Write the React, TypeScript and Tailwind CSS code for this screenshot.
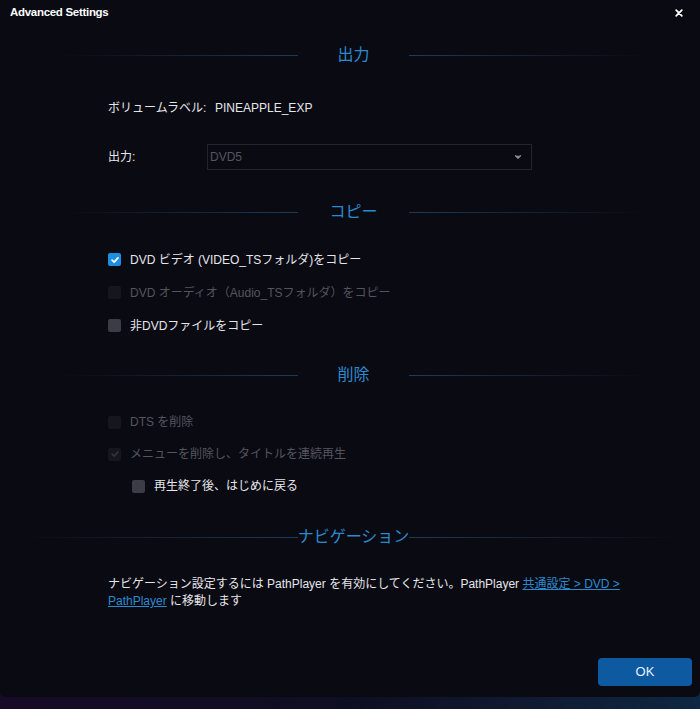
import { ChevronDown } from 'lucide-react';

const FONT = "font-['Liberation_Sans','Noto_Sans_CJK_JP',sans-serif]";

function SectionHeading({ title, wide = false }: { title: string; wide?: boolean }) {
  return (
    <div className="flex h-[24px] items-center">
      <div className={`h-px bg-gradient-to-r from-transparent to-[#1f3a55] ${wide ? 'ml-[20px] w-[278px]' : 'ml-[60px] w-[238px]'}`} />
      <div className="flex w-[111px] shrink-0 justify-center whitespace-nowrap text-[16px] leading-none text-[#2a8ad0]">{title}</div>
      <div className={`h-px bg-gradient-to-l from-transparent to-[#1f3a55] ${wide ? 'w-[270px]' : 'w-[238px]'}`} />
    </div>
  );
}

function Check({ checked = false, disabled = false }: { checked?: boolean; disabled?: boolean }) {
  if (checked && !disabled) {
    return (
      <span className="flex h-[13px] w-[13px] items-center justify-center rounded-[2px] bg-[#1e8fe0]">
        <svg viewBox="0 0 12 12" className="h-[10px] w-[10px]" fill="none" stroke="white" strokeWidth="2" strokeLinecap="round" strokeLinejoin="round">
          <path d="M2.5 6.2 5 8.6 9.6 3.4" />
        </svg>
      </span>
    );
  }
  if (checked && disabled) {
    return (
      <span className="flex h-[13px] w-[13px] items-center justify-center rounded-[2px] bg-[#16161e]">
        <svg viewBox="0 0 12 12" className="h-[10px] w-[10px]" fill="none" stroke="#33333d" strokeWidth="2" strokeLinecap="round" strokeLinejoin="round">
          <path d="M2.5 6.2 5 8.6 9.6 3.4" />
        </svg>
      </span>
    );
  }
  return <span className={`h-[13px] w-[13px] rounded-[2px] ${disabled ? 'bg-[#16161e]' : 'bg-[#3c3c46]'}`} />;
}

function CheckRow({ label, checked, disabled, indent = false, h = 'h-[33px]' }: { label: string; checked?: boolean; disabled?: boolean; indent?: boolean; h?: string }) {
  return (
    <div className={`flex ${h} items-center gap-[9px] ${indent ? 'pl-[132px]' : 'pl-[108px]'}`}>
      <Check checked={checked} disabled={disabled} />
      <span className={`text-[12px] ${disabled ? 'text-[#55555e]' : 'text-[#e6e6ea]'}`}>{label}</span>
    </div>
  );
}

export default function App() {
  return (
    <div className={`h-[709px] w-[700px] overflow-hidden bg-gradient-to-r from-[#170a28] via-[#0e0e22] to-[#0e2742] ${FONT}`}>
      <div className="relative h-[697px] w-[700px] rounded-b-[6px] bg-[#0a0a12]">
        <div className="flex h-[26px] items-center justify-between px-[10px]">
          <span className="text-[11.5px] font-bold tracking-[-0.3px] text-white">Advanced Settings</span>
          <svg viewBox="0 0 10 10" className="mr-[7px] h-[8px] w-[8px]" stroke="white" strokeWidth="2.2" strokeLinecap="round">
            <path d="M1.5 1.5 8.5 8.5M8.5 1.5 1.5 8.5" />
          </svg>
        </div>

        <div className="mt-[17px]">
          <SectionHeading title="出力" />
        </div>

        <div className="mt-[31px] flex h-[20px] items-center pl-[108px] text-[12px] text-[#e6e6ea]">
          <span className="w-[107px]">ボリュームラベル:</span>
          <span>PINEAPPLE_EXP</span>
        </div>

        <div className="mt-[26px] flex h-[26px] items-center pl-[108px] text-[12px]">
          <span className="w-[99px] text-[#e6e6ea]">出力:</span>
          <div className="flex h-[26px] w-[325px] items-center justify-between border border-[#24242e] pl-[2px] pr-[8px] text-[#55555f]">
            <span>DVD5</span>
            <ChevronDown className="h-[10px] w-[10px] fill-[#8a8a94] text-[#8a8a94]" strokeWidth={3} />
          </div>
        </div>

        <div className="mt-[30px]">
          <SectionHeading title="コピー" />
        </div>

        <div className="mt-[19px]">
          <CheckRow label="DVD ビデオ (VIDEO_TSフォルダ)をコピー" checked />
          <CheckRow label="DVD オーディオ（Audio_TSフォルダ）をコピー" disabled />
          <CheckRow label="非DVDファイルをコピー" />
        </div>

        <div className="mt-[21px]">
          <SectionHeading title="削除" />
        </div>

        <div className="mt-[19px]">
          <CheckRow h="h-[32px]" label="DTS を削除" disabled />
          <CheckRow h="h-[32px]" label="メニューを削除し、タイトルを連続再生" checked disabled />
          <CheckRow h="h-[32px]" label="再生終了後、はじめに戻る" indent />
        </div>

        <div className="mt-[23px]">
          <SectionHeading title="ナビゲーション" wide />
        </div>

        <div className="mt-[27px] pl-[108px] text-[12px] leading-[17px] text-[#e6e6ea]">
          <p className="whitespace-nowrap">
            ナビゲーション設定するには PathPlayer を有効にしてください。PathPlayer{' '}
            <span className="text-[#2a8ad0] underline">共通設定 &gt; DVD &gt;</span>
          </p>
          <p className="whitespace-nowrap">
            <span className="text-[#2a8ad0] underline">PathPlayer</span> に移動します
          </p>
        </div>

        <div className="absolute bottom-[11px] right-[8px]">
          <button className="h-[28px] w-[94px] rounded-[4px] bg-[#0d5aa0] text-[13px] text-[#e8f0fa]">OK</button>
        </div>
      </div>
    </div>
  );
}
